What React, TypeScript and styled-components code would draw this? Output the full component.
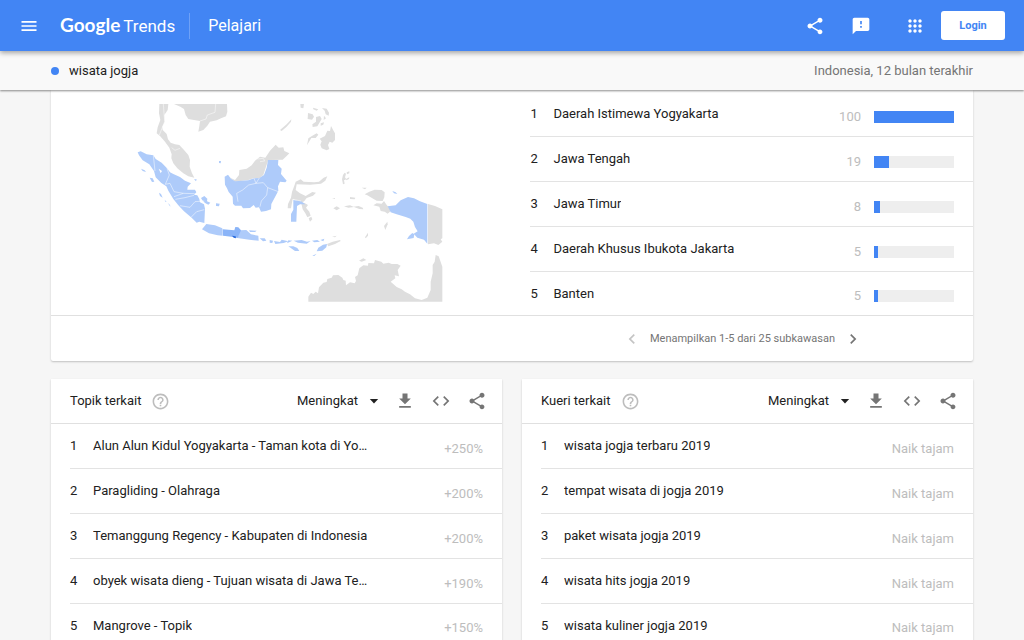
import React from "react";
import styled, { createGlobalStyle } from "styled-components";

const GlobalStyle = createGlobalStyle`
  * { box-sizing: border-box; }
  body { margin: 0; background: #f6f6f6; color: #212121; font: 13px/20px Roboto, sans-serif; }
  button, select { font: inherit; color: inherit; }
`;

const Page = styled.div`
  display: flex;
  flex-direction: column;
  height: 100vh;
`;

const TopBar = styled.header`
  display: flex;
  align-items: center;
  flex: none;
  height: 51px;
  padding: 0 19px;
  background: #4285f4;
  color: #fff;
  box-shadow: 0 2px 5px rgba(0, 0, 0, 0.35);
  z-index: 2;
`;

const IconButton = styled.button`
  display: flex;
  align-items: center;
  justify-content: center;
  flex: none;
  width: 20px;
  height: 20px;
  padding: 0;
  border: 0;
  background: none;
  color: inherit;
  cursor: pointer;
`;

const Logo = styled.a`
  display: flex;
  align-items: baseline;
  gap: 3px;
  margin-left: 21px;
  padding-right: 14px;
  height: 26px;
  border-right: 1px solid #6ea1f7;
  color: #fff;
  font: 17px/24px Roboto, sans-serif;
  text-decoration: none;
`;

const LogoStrong = styled.span`
  font: 700 19px/24px Lato, sans-serif;
`;

const Section = styled.h1`
  margin: 0 auto 0 18px;
  font-size: 16px;
  line-height: 24px;
  font-weight: 400;
`;

const TopActions = styled.div`
  display: flex;
  align-items: center;
  gap: 26px;
  margin-right: 16px;
`;

const AppsSlot = styled.div`
  margin-left: 8px;
`;

const Login = styled.button`
  width: 64px;
  height: 29px;
  border: 0;
  border-radius: 3px;
  background: #fff;
  color: #4285f4;
  font-size: 11px;
  font-weight: 700;
  cursor: pointer;
`;

const QueryBar = styled.div`
  display: flex;
  align-items: center;
  flex: none;
  height: 39px;
  padding: 0 51px;
  background: #f9f9f9;
  box-shadow: 0 1px 2px rgba(0, 0, 0, 0.45);
  z-index: 1;
`;

const Dot = styled.span`
  width: 8px;
  height: 8px;
  margin-right: 10px;
  border-radius: 50%;
  background: #4285f4;
`;

const Scope = styled.span`
  margin-left: auto;
  color: #757575;
`;

const Main = styled.main`
  flex: 1;
  min-height: 0;
  padding: 0 51px;
  overflow-y: auto;
  scrollbar-width: none;
`;

const Card = styled.section`
  min-width: 0;
  background: #fff;
  border-radius: 0 0 2px 2px;
  box-shadow: 0 1px 2px rgba(0, 0, 0, 0.22);
`;

const RegionBody = styled.div`
  display: grid;
  grid-template-columns: 1fr 48%;
  padding-top: 2px;
  border-bottom: 1px solid #e0e0e0;
`;

const MapPane = styled.div`
  display: flex;
  justify-content: center;
  padding: 3px 12px 0 0;
`;

const List = styled.ol`
  margin: 0;
  padding: 0;
  list-style: none;
`;

const Row = styled.li`
  display: flex;
  align-items: center;
  height: 45px;
  padding-right: 19px;
  border-bottom: 1px solid #e3e3e3;
  &:last-child { height: 43px; border-bottom: 0; }
`;

const Rank = styled.span`
  flex: none;
  width: 23px;
`;

const Name = styled.span`
  overflow: hidden;
  white-space: nowrap;
  text-overflow: ellipsis;
`;

const Value = styled.span`
  margin: 5px 0 0 auto;
  color: #bdbdbd;
`;

const Track = styled.span`
  width: 80px;
  height: 12px;
  margin: 5px 0 0 13px;
  background: #eee;
`;

const Fill = styled.span`
  display: block;
  height: 100%;
  background: #4285f4;
`;

const Pager = styled.nav`
  display: flex;
  align-items: center;
  justify-content: center;
  gap: 8px;
  width: 50%;
  height: 45px;
  margin-left: auto;
  color: #757575;
  font-size: 11px;
`;

const Pair = styled.div`
  display: grid;
  grid-template-columns: 1fr 1fr;
  gap: 20px;
  padding: 18px 0;
`;

const CardHead = styled.header`
  display: flex;
  align-items: center;
  height: 45px;
  padding: 0 15px 0 19px;
  border-bottom: 1px solid #e0e0e0;
`;

const CardTitle = styled.h2`
  margin: 0 10px 0 0;
  font-size: 13px;
  font-weight: 400;
`;

const Help = styled.span`
  display: flex;
  color: #bdbdbd;
`;

const Tools = styled.div`
  display: flex;
  align-items: center;
  gap: 16px;
  margin-left: 11px;
  color: #757575;
`;

const Picker = styled.label`
  display: grid;
  align-items: center;
  margin-left: auto;
  color: #212121;
  > * { grid-area: 1 / 1; }
  > svg { justify-self: end; pointer-events: none; }
`;

const Select = styled.select`
  appearance: none;
  width: 87px;
  padding: 0;
  border: 0;
  background: none;
`;

const Inset = styled.div`
  padding-left: 19px;
`;

const icons = {
  menu: "M3 18h18v-2H3v2zm0-5h18v-2H3v2zm0-7v2h18V6H3z",
  share:
    "M18 16.08c-.76 0-1.44.3-1.96.77L8.91 12.7c.05-.23.09-.46.09-.7s-.04-.47-.09-.7l7.05-4.11c.54.5 1.25.81 2.04.81 1.66 0 3-1.34 3-3s-1.34-3-3-3-3 1.34-3 3c0 .24.04.47.09.7L8.04 9.81C7.5 9.31 6.79 9 6 9c-1.66 0-3 1.34-3 3s1.34 3 3 3c.79 0 1.5-.31 2.04-.81l7.12 4.16c-.05.21-.08.43-.08.65 0 1.61 1.31 2.92 2.92 2.92s2.92-1.31 2.92-2.92-1.31-2.92-2.92-2.92z",
  feedback:
    "M20 2H4c-1.1 0-1.99.9-1.99 2L2 22l4-4h14c1.1 0 2-.9 2-2V4c0-1.1-.9-2-2-2zm-7 12h-2v-2h2v2zm0-4h-2V6h2v4z",
  apps:
    "M6 8c1.1 0 2-.9 2-2s-.9-2-2-2-2 .9-2 2 .9 2 2 2zm6 12c1.1 0 2-.9 2-2s-.9-2-2-2-2 .9-2 2 .9 2 2 2zm-6 0c1.1 0 2-.9 2-2s-.9-2-2-2-2 .9-2 2 .9 2 2 2zm0-6c1.1 0 2-.9 2-2s-.9-2-2-2-2 .9-2 2 .9 2 2 2zm6 0c1.1 0 2-.9 2-2s-.9-2-2-2-2 .9-2 2 .9 2 2 2zm4-8c0 1.1.9 2 2 2s2-.9 2-2-.9-2-2-2-2 .9-2 2zm-4 2c1.1 0 2-.9 2-2s-.9-2-2-2-2 .9-2 2 .9 2 2 2zm6 6c1.1 0 2-.9 2-2s-.9-2-2-2-2 .9-2 2 .9 2 2 2zm0 6c1.1 0 2-.9 2-2s-.9-2-2-2-2 .9-2 2 .9 2 2 2z",
  help:
    "M11 18h2v-2h-2v2zm1-16C6.48 2 2 6.48 2 12s4.48 10 10 10 10-4.48 10-10S17.52 2 12 2zm0 18c-4.41 0-8-3.59-8-8s3.59-8 8-8 8 3.59 8 8-3.59 8-8 8zm0-14c-2.21 0-4 1.79-4 4h2c0-1.1.9-2 2-2s2 .9 2 2c0 2-3 1.75-3 5h2c0-2.25 3-2.5 3-5 0-2.21-1.79-4-4-4z",
  download: "M19 9h-4V3H9v6H5l7 7 7-7zM5 18v2h14v-2H5z",
  code: "M9.4 16.6L4.8 12l4.6-4.6L8 6l-6 6 6 6 1.4-1.4zm5.2 0l4.6-4.6-4.6-4.6L16 6l6 6-6 6-1.4-1.4z",
  drop: "M7 9.5l5 5.5 5-5.5z",
  prev: "M15.41 7.41L14 6l-6 6 6 6 1.41-1.41L10.83 12z",
  next: "M10 6L8.59 7.41 13.17 12l-4.58 4.59L10 18l6-6z",
};

function Icon({ name, size = 20, fill = "currentColor" }: { name: keyof typeof icons; size?: number; fill?: string }) {
  return (
    <svg width={size} height={size} viewBox="0 0 24 24" fill={fill} aria-hidden="true">
      <path d={icons[name]} />
    </svg>
  );
}

const neighbours = [
  // Thailand, Malay peninsula, Indochina
  "118,27 145,27 143,45 133,60 134,80 127,95 128,105 140,117 144,133 152,143 165,148 178,150 190,163 205,180 210,195 209,215 216,235 223,248 205,244 190,235 172,220 160,205 154,190 155,178 148,158 135,140 120,123 110,115 113,97 121,75 117,55",
  "162,27 181,35 192,42 197,60 205,72 222,75 240,78 238,93 235,110 250,105 262,92 270,80 290,76 303,70 318,64 322,50 321,27",
  // Sabah, Sarawak, Papua New Guinea
  "328,247 345,255 357,240 358,225 380,221 395,211 405,197 420,185 436,188 450,167 467,149 476,158 490,157 493,168 508,175 500,183 488,194 445,195 438,215 430,240 418,250 400,250 385,255 345,260",
  "924,327 945,333 967,343 967,430 962,433 967,440 955,450 942,445 924,448",
  // Australia
  "565,620 565,605 573,593 580,597 587,590 594,595 597,577 610,563 620,561 622,552 635,548 639,541 655,540 667,548 670,555 677,557 678,571 690,562 704,565 708,558 705,546 713,541 718,520 730,511 744,512 745,504 762,505 765,495 784,500 790,506 806,503 815,507 832,507 842,512 833,525 837,544 824,541 826,550 812,560 830,576 845,583 855,590 870,598 885,610 905,615 922,608 932,585 932,560 938,535 938,510 944,500 947,480 956,484 960,495 967,515 967,620",
  // Palawan and the Philippines
  "480,105 500,88 514,73 513,80 500,95 485,108",
  "541,27 552,27 550,40 542,38",
  "564,54 578,58 582,65 576,74 563,72",
  "579,38 595,43 590,47 580,43",
  "606,39 620,41 627,53 626,62 617,58 614,47",
  "588,66 600,63 605,72 592,94 578,96 577,88 588,80",
  "602,85 612,82 610,89 602,92",
  "612,62 618,70 611,75",
  "561,151 565,130 577,122 590,115 595,119 587,129 574,129",
  "633,93 641,108 645,115 645,135 637,143 629,140 624,150 628,162 620,166 605,160 601,149 605,139 599,131 615,123 622,107 630,108",
  // Sulawesi
  "523,272 527,260 542,253 551,260 583,262 597,260 611,248 622,244 616,257 603,266 570,269 530,268 527,285 540,295 557,303 577,291 588,293 579,302 560,309 553,318 545,324 518,312 513,340 503,340 504,327 513,308 516,291",
  "543,321 555,325 564,330 558,338 568,350 572,362 562,367 556,355 548,343",
  "566,370 574,365 577,373 570,380",
  // Moluccas and western New Guinea
  "669,240 674,233 678,236 675,247 679,253 672,256 674,266 669,268 666,253",
  "680,232 688,229 688,235 681,238",
  "678,252 688,247 687,252 679,256",
  "725,278 740,278 735,283",
  "734,298 748,290 764,284 785,285 794,292 793,307 788,318 770,317 757,310 742,301",
  "760,331 770,325 785,326 792,318 800,330 812,343 810,350 803,356 794,350 782,348 778,335",
  "640,340 650,334 660,340 650,346",
  "672,334 690,331 700,335 716,333 728,338 730,343 718,342 702,336 685,338",
  "690,306 706,308 704,313 690,312",
  "792,393 802,380 803,388 796,405",
  "735,427 744,413 744,422 737,430",
  "636,309 645,309 645,312",
  // Timor-Leste
  "621,447 638,440 660,435 662,438 645,447 625,454",
  "717,497 730,490 739,495 725,500",
  "636,425 650,422 645,427",
];

const provinces = [
  // Sumatra
  "53,172 62,169 80,178 100,181 107,192 125,203 141,220 150,232 160,237 180,246 195,257 213,265 203,275 202,284 225,284 229,292 222,299 232,301 238,312 240,322 252,328 255,341 253,384 238,380 230,383 215,368 192,349 175,331 160,312 145,287 139,274 124,264 107,247 102,228 88,208 68,196 57,181",
  "243,309 253,303 262,311 261,319 271,323 265,329 255,324 247,316",
  "288,325 299,326 297,334 288,333",
  "297,198 303,198 302,205 297,204",
  "222,253 230,253 228,259",
  "63,221 74,226 78,231 68,228",
  "89,248 98,250 103,260 96,261",
  "117,293 123,297 128,308 120,303",
  "134,314 140,321 136,320",
  "143,323 150,330 151,335",
  // Kalimantan
  "314,245 324,239 333,251 345,259 385,256 402,250 418,249 432,240 440,218 444,195 475,195 474,210 485,221 483,237 500,257 496,262 480,260 474,274 475,287 464,308 454,327 453,343 438,348 423,350 417,337 407,338 401,330 390,339 369,340 364,332 345,332 339,326 338,305 326,291 321,280 315,269",
  // Java and the Lesser Sundas
  "246,403 259,387 285,391 307,400 308,422 293,421 267,415",
  "352,429 361,406 379,405 393,418 415,422 416,437 388,434",
  "387,406 410,407 405,411 390,411",
  "419,430 434,430 439,437 429,439",
  "449,435 459,437 457,444 449,443",
  "462,438 480,441 485,434 505,439 491,444 466,447",
  "505,436 517,437 501,445",
  "521,437 545,435 561,440 572,438 560,446 534,443",
  "576,437 592,435 600,440 583,442",
  "601,435 613,431 610,439",
  "505,454 520,454 532,459 538,468 525,468",
  "590,469 595,458 609,449 621,447 619,457 607,467",
  "577,482 590,476 583,483",
  "520,315 543,319 556,328 540,328 531,333 529,380 513,380 513,357 520,344",
  // Papua
  "817,288 827,292 832,297 822,295",
  "803,334 827,331 842,316 864,306 882,310 900,319 922,327 922,446 912,434 892,428 881,416 893,409 885,396 880,380 871,371 857,366 830,358 812,352",
  "861,433 867,423 877,414 883,418 881,429",
];

const borders =
  "M100,181 105,228 M141,220 148,240 136,268 M150,265 162,290 190,295 224,296 M150,265 136,268 M162,305 190,295 M166,313 195,308 222,301 M180,332 210,337 225,320 253,318 M214,366 230,350 253,344 M402,250 408,265 386,270 368,285 350,295 354,320 M408,265 430,263 443,278 440,300 M418,249 408,265 M440,300 424,318 420,335 M443,278 475,290 M118,120 134,80 130,27 M240,78 258,72 262,60 285,52 287,27 M155,158 165,166 180,160 M412,192 430,190 434,198 420,200 M520,313 543,318";

function IndonesiaMap() {
  return (
    <svg width="330" height="210" viewBox="0 0 990 630" role="img" aria-label="Peta minat menurut subkawasan">
      <g fill="#dedede">
        {neighbours.map((p) => (
          <polygon key={p} points={p} />
        ))}
      </g>
      <g fill="#aecbfa">
        {provinces.map((p) => (
          <polygon key={p} points={p} />
        ))}
      </g>
      <polygon fill="#8ab4f8" points="308,403 343,406 346,396 355,397 363,406 353,429 340,426 309,422" />
      <polygon fill="#2a6bdd" points="336,422 347,424 348,430 341,428" />
      <path d="M116,221 126,228 122,235Z" fill="#fff" />
      <path d={borders} fill="none" stroke="#fff" strokeOpacity="0.75" strokeWidth="2" />
    </svg>
  );
}

const regions = [
  { name: "Daerah Istimewa Yogyakarta", value: 100 },
  { name: "Jawa Tengah", value: 19 },
  { name: "Jawa Timur", value: 8 },
  { name: "Daerah Khusus Ibukota Jakarta", value: 5 },
  { name: "Banten", value: 5 },
];

const topics = [
  ["Alun Alun Kidul Yogyakarta - Taman kota di Yo…", "+250%"],
  ["Paragliding - Olahraga", "+200%"],
  ["Temanggung Regency - Kabupaten di Indonesia", "+200%"],
  ["obyek wisata dieng - Tujuan wisata di Jawa Te…", "+190%"],
  ["Mangrove - Topik", "+150%"],
];

const queries = [
  ["wisata jogja terbaru 2019", "Naik tajam"],
  ["tempat wisata di jogja 2019", "Naik tajam"],
  ["paket wisata jogja 2019", "Naik tajam"],
  ["wisata hits jogja 2019", "Naik tajam"],
  ["wisata kuliner jogja 2019", "Naik tajam"],
];

function RelatedCard({ title, items }: { title: string; items: string[][] }) {
  return (
    <Card>
      <CardHead>
        <CardTitle>{title}</CardTitle>
        <Help>
          <Icon name="help" size={19} />
        </Help>
        <Picker>
          <Select aria-label={`Urutkan ${title}`}>
            <option>Meningkat</option>
          </Select>
          <Icon name="drop" />
        </Picker>
        <Tools>
          <IconButton aria-label="Unduh"><Icon name="download" /></IconButton>
          <IconButton aria-label="Sematkan"><Icon name="code" /></IconButton>
          <IconButton aria-label="Bagikan"><Icon name="share" /></IconButton>
        </Tools>
      </CardHead>
      <Inset>
        <List>
          {items.map(([name, value], i) => (
            <Row key={name}>
              <Rank>{i + 1}</Rank>
              <Name>{name}</Name>
              <Value>{value}</Value>
            </Row>
          ))}
        </List>
      </Inset>
    </Card>
  );
}

export default function App() {
  return (
    <Page>
      <GlobalStyle />
      <TopBar>
        <IconButton aria-label="Menu"><Icon name="menu" /></IconButton>
        <Logo href="#"><LogoStrong>Google</LogoStrong> Trends</Logo>
        <Section>Pelajari</Section>
        <TopActions>
          <IconButton aria-label="Bagikan"><Icon name="share" /></IconButton>
          <IconButton aria-label="Kirim masukan"><Icon name="feedback" /></IconButton>
          <AppsSlot>
            <IconButton aria-label="Aplikasi Google"><Icon name="apps" /></IconButton>
          </AppsSlot>
        </TopActions>
        <Login>Login</Login>
      </TopBar>
      <QueryBar>
        <Dot />
        <span>wisata jogja</span>
        <Scope>Indonesia, 12 bulan terakhir</Scope>
      </QueryBar>
      <Main>
        <Card>
          <RegionBody>
            <MapPane><IndonesiaMap /></MapPane>
            <List>
              {regions.map((r, i) => (
                <Row key={r.name}>
                  <Rank>{i + 1}</Rank>
                  <Name>{r.name}</Name>
                  <Value>{r.value}</Value>
                  <Track><Fill style={{ width: `${r.value}%` }} /></Track>
                </Row>
              ))}
            </List>
          </RegionBody>
          <Pager aria-label="Halaman subkawasan">
            <IconButton aria-label="Sebelumnya" disabled><Icon name="prev" fill="#c4c4c4" /></IconButton>
            <span>Menampilkan 1-5 dari 25 subkawasan</span>
            <IconButton aria-label="Berikutnya"><Icon name="next" /></IconButton>
          </Pager>
        </Card>
        <Pair>
          <RelatedCard title="Topik terkait" items={topics} />
          <RelatedCard title="Kueri terkait" items={queries} />
        </Pair>
      </Main>
    </Page>
  );
}
